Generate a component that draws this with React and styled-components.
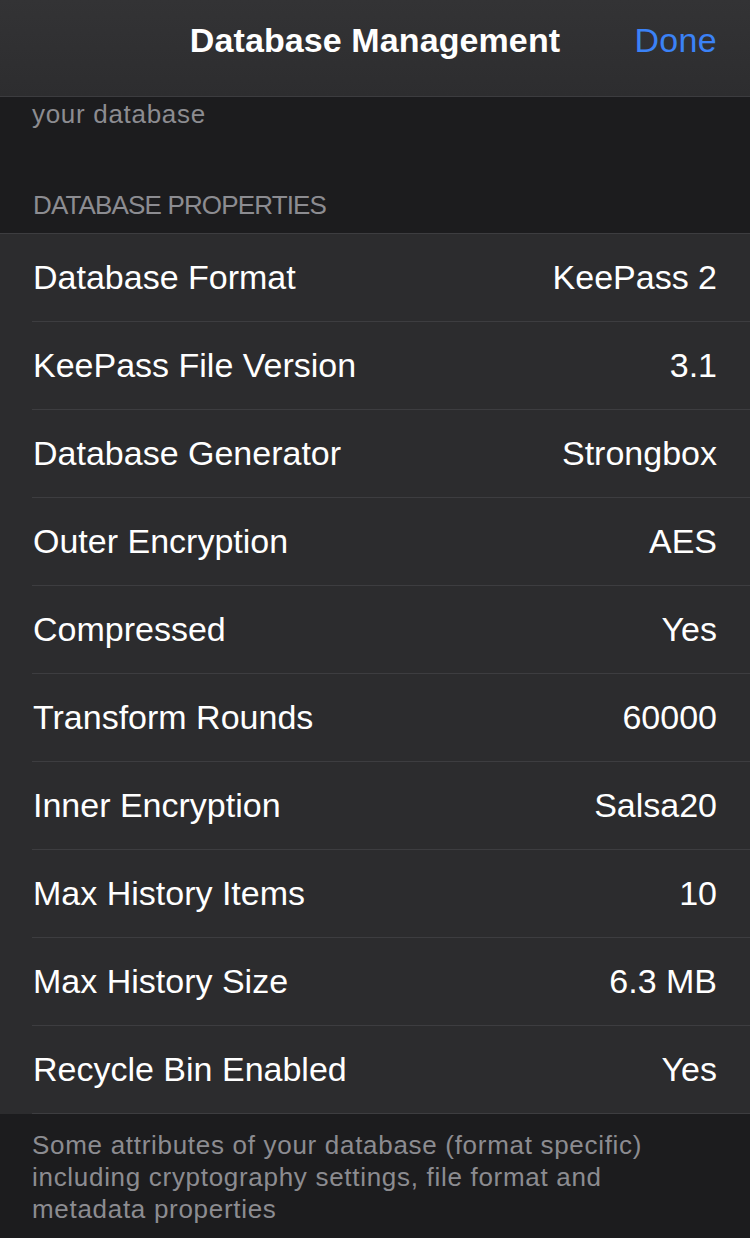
import React from "react";
import styled, { createGlobalStyle } from "styled-components";

const GlobalStyle = createGlobalStyle`
  html, body {
    margin: 0;
    padding: 0;
    background: #1c1c1e;
  }
  body {
    font-family: "Liberation Sans", Arial, sans-serif;
    -webkit-font-smoothing: antialiased;
  }
`;

const Screen = styled.div`
  width: 750px;
  min-height: 1238px;
  background: #1c1c1e;
  display: flex;
  flex-direction: column;
  overflow: hidden;
`;

const NavBar = styled.header`
  height: 96px;
  display: grid;
  grid-template-columns: 1fr auto 1fr;
  align-items: center;
  background: linear-gradient(#333335, #2d2d2f);
  border-bottom: 1px solid #3c3c3f;
  padding: 0 33px;
  box-sizing: content-box;
`;

const NavTitle = styled.h1`
  grid-column: 2;
  margin: 0;
  font-size: 34px;
  font-weight: 700;
  color: #ffffff;
  letter-spacing: 0.1px;
  line-height: 40px;
  padding-bottom: 16px;
`;

const NavButton = styled.button`
  grid-column: 3;
  justify-self: end;
  background: none;
  border: none;
  padding: 0 0 16px;
  font-family: inherit;
  font-size: 34px;
  line-height: 40px;
  color: #3b82f6;
  letter-spacing: 0.3px;
  cursor: pointer;
`;

const Note = styled.p`
  margin: ${(p) => p.$top || 0}px 0 0;
  padding: 0 32px;
  font-size: 26px;
  line-height: 32px;
  letter-spacing: 0.7px;
  color: #8c8c91;
`;

const SectionHeader = styled.h2`
  margin: 59px 0 0;
  padding: 0 33px 12px;
  font-size: 26px;
  line-height: 32px;
  font-weight: 400;
  letter-spacing: -0.85px;
  text-transform: uppercase;
  color: #8c8c91;
`;

const Group = styled.ul`
  list-style: none;
  margin: 0;
  padding: 0;
  background: #2c2c2e;
  border-top: 1px solid #3d3d40;
`;

const Row = styled.li`
  padding-left: 32px;
`;

const RowInner = styled.div`
  height: 87px;
  display: flex;
  align-items: center;
  justify-content: space-between;
  padding-right: 33px;
  border-bottom: 1px solid #3d3d40;
`;

const Label = styled.span`
  font-size: 34px;
  color: #ffffff;
  padding-left: 1px;
`;

const Value = styled.span`
  font-size: 34px;
  color: #ffffff;
`;

const rows = [
  ["Database Format", "KeePass 2"],
  ["KeePass File Version", "3.1"],
  ["Database Generator", "Strongbox"],
  ["Outer Encryption", "AES"],
  ["Compressed", "Yes"],
  ["Transform Rounds", "60000"],
  ["Inner Encryption", "Salsa20"],
  ["Max History Items", "10"],
  ["Max History Size", "6.3 MB"],
  ["Recycle Bin Enabled", "Yes"],
];

export default function App() {
  return (
    <>
      <GlobalStyle />
      <Screen>
        <NavBar>
          <NavTitle>Database Management</NavTitle>
          <NavButton>Done</NavButton>
        </NavBar>
        <Note $top={1}>your database</Note>
        <SectionHeader>Database Properties</SectionHeader>
        <Group>
          {rows.map(([label, value]) => (
            <Row key={label}>
              <RowInner>
                <Label>{label}</Label>
                <Value>{value}</Value>
              </RowInner>
            </Row>
          ))}
        </Group>
        <Note $top={15}>
          Some attributes of your database (format specific)
          <br />
          including cryptography settings, file format and
          <br />
          metadata properties
        </Note>
      </Screen>
    </>
  );
}
